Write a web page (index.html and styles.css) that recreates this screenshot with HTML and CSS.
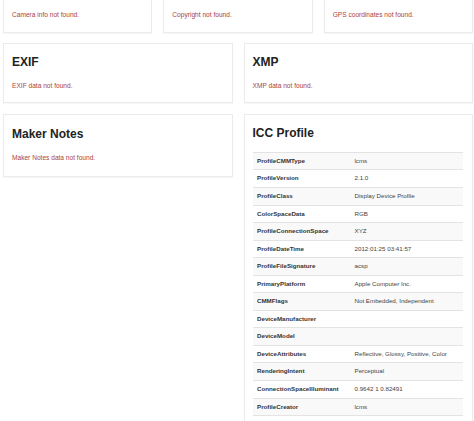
FILE: index.html
```html
<!DOCTYPE html>
<html>
<head>
<meta charset="utf-8">
<link rel="stylesheet" href="styles.css">
</head>
<body>
<div class="page">
  <div class="row three">
    <div class="card top"><p class="missing">Camera info not found.</p></div>
    <div class="card top"><p class="missing">Copyright not found.</p></div>
    <div class="card top"><p class="missing">GPS coordinates not found.</p></div>
  </div>
  <div class="row two">
    <div class="card"><h3>EXIF</h3><p class="missing">EXIF data not found.</p></div>
    <div class="card"><h3>XMP</h3><p class="missing">XMP data not found.</p></div>
  </div>
  <div class="row two">
    <div class="card tall"><h3>Maker Notes</h3><p class="missing">Maker Notes data not found.</p></div>
    <div class="card">
      <h3 class="tight">ICC Profile</h3>
      <table class="meta">
        <tr><th>ProfileCMMType</th><td>lcms</td></tr>
        <tr><th>ProfileVersion</th><td>2.1.0</td></tr>
        <tr><th>ProfileClass</th><td>Display Device Profile</td></tr>
        <tr><th>ColorSpaceData</th><td>RGB</td></tr>
        <tr><th>ProfileConnectionSpace</th><td>XYZ</td></tr>
        <tr><th>ProfileDateTime</th><td>2012:01:25 03:41:57</td></tr>
        <tr><th>ProfileFileSignature</th><td>acsp</td></tr>
        <tr><th>PrimaryPlatform</th><td>Apple Computer Inc.</td></tr>
        <tr><th>CMMFlags</th><td>Not Embedded, Independent</td></tr>
        <tr><th>DeviceManufacturer</th><td></td></tr>
        <tr><th>DeviceModel</th><td></td></tr>
        <tr><th>DeviceAttributes</th><td>Reflective, Glossy, Positive, Color</td></tr>
        <tr><th>RenderingIntent</th><td>Perceptual</td></tr>
        <tr><th>ConnectionSpaceIlluminant</th><td>0.9642 1 0.82491</td></tr>
        <tr><th>ProfileCreator</th><td>lcms</td></tr>
      </table>
    </div>
  </div>
</div>
</body>
</html>
```

FILE: styles.css
```css
html, body {
  margin: 0;
  padding: 0;
  background: #fff;
}
body {
  font-family: "Liberation Sans", Arial, sans-serif;
  color: #333;
  overflow: hidden;
}
.page {
  width: 470px;
  padding-left: 3px;
}
.row {
  display: grid;
  column-gap: 11px;
  align-items: start;
  margin-bottom: 11px;
}
.row.three { grid-template-columns: repeat(3, 1fr); margin-bottom: 10px; }
.row.two { grid-template-columns: 1fr 1fr; }
.card {
  border: 1px solid #ebebeb;
  box-shadow: 0 1px 1px rgba(0,0,0,0.03);
  padding: 12px 8px 12px;
  background: #fff;
}
.card.top {
  border-top: 0;
  padding-top: 9.5px;
  padding-bottom: 13px;
}
.card.tall { padding-top: 12.5px; padding-bottom: 13.5px; }
.card h3 {
  margin: 0 0 11.7px;
  font-size: 12px;
  line-height: 13.2px;
  font-weight: bold;
  color: #222;
}
.card.tall h3 { margin-bottom: 12.2px; }
.card h3.tight { margin-bottom: 11.5px; }
.missing {
  margin: 0;
  font-size: 6.6px;
  line-height: 9.4px;
  color: #a94442;
}
.meta {
  width: 210px;
  border-collapse: collapse;
  font-size: 6.2px;
  line-height: 8.55px;
  border-bottom: 1px solid #e3e3e3;
}
.meta th, .meta td {
  padding: 4px 4px 4px 4.5px;
  border-top: 1px solid #e3e3e3;
  text-align: left;
  vertical-align: top;
  height: 8.55px;
}
.meta th { width: 89px; font-weight: bold; color: #333; }
.meta td { color: #444; }
.meta tr:nth-child(odd) { background: #f9f9f9; }
```
